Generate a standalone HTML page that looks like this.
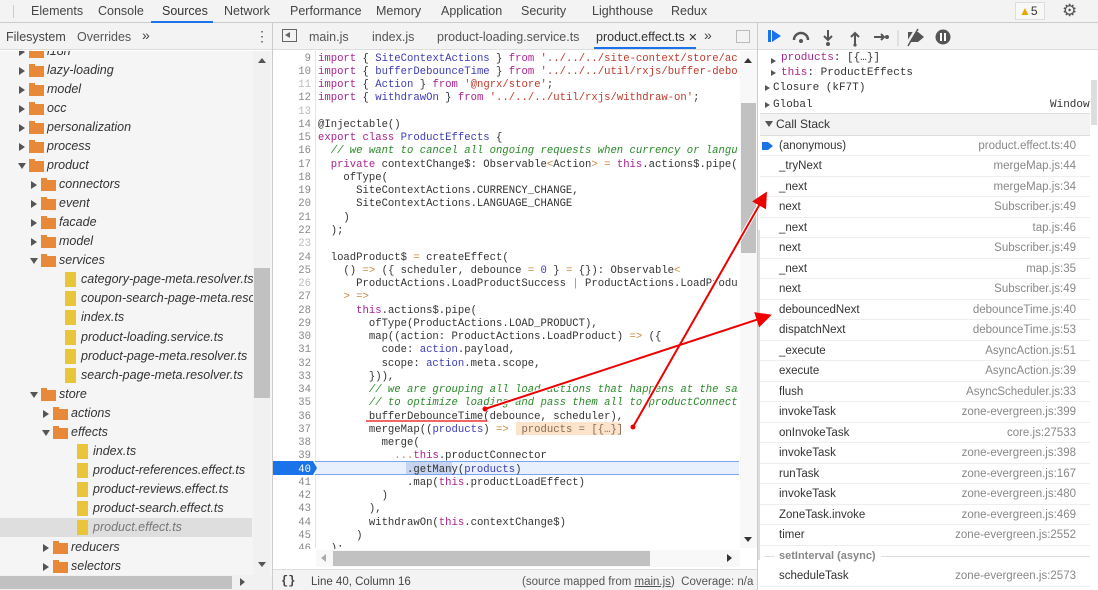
<!DOCTYPE html>
<html><head><meta charset="utf-8"><style>
*{margin:0;padding:0;box-sizing:border-box}
body{width:1098px;height:590px;overflow:hidden;background:#fff;font-family:"Liberation Sans",sans-serif;font-size:12px;color:#333;position:relative}
.a{position:absolute;white-space:nowrap}
.tab{position:absolute;top:4px;font-size:12.5px;color:#444}
.t{position:absolute;height:19px;line-height:19px;font-style:italic;font-size:12.5px;color:#333;white-space:nowrap}
.fo{position:absolute;width:15px;height:11px;background:#e8893a;top:5px}
.fo:before{content:"";position:absolute;left:0;top:-2px;width:6px;height:3px;background:#e8893a}
.fi{position:absolute;width:11px;height:15px;background:#e9c53c;top:2px}
.ar{position:absolute;top:6px;width:0;height:0;border-left:6px solid #555;border-top:4px solid transparent;border-bottom:4px solid transparent}
.ad{position:absolute;top:7px;width:0;height:0;border-top:6px solid #555;border-left:4px solid transparent;border-right:4px solid transparent}
.ln{position:absolute;left:275px;width:36px;text-align:right;font-family:"Liberation Mono",monospace;font-size:10.6px;color:#888;height:13.26px;line-height:13.26px}
.cd{position:absolute;left:318px;width:420px;overflow:hidden;font-family:"Liberation Mono",monospace;font-size:10.6px;white-space:pre;color:#333;height:13.26px;line-height:13.26px}
.k{color:#a8238f}.v{color:#3c3cb8}.s{color:#c0392b}.c{color:#2a8a2a;font-style:italic}.o{color:#c8873a}
.cs{position:absolute;left:760px;width:330px;height:20.5px;border-bottom:1px solid #eee;font-size:11.5px;line-height:20px}
.cs .n{position:absolute;left:19px;color:#333}
.cs .f{position:absolute;right:14px;color:#888}
.sc{position:absolute;font-family:"Liberation Mono",monospace;font-size:11px;color:#333}
</style></head><body>
<div class="a" style="left:0;top:0;width:1098px;height:23px;background:#f3f3f3;border-bottom:1px solid #ccc"></div>
<div class="a" style="left:13px;top:5px;width:1px;height:13px;background:#ccc"></div>
<div class="tab" style="left:31px">Elements</div>
<div class="tab" style="left:98px">Console</div>
<div class="tab" style="left:162px;color:#333">Sources</div>
<div class="a" style="left:151px;top:21px;width:62px;height:2px;background:#1a73e8"></div>
<div class="tab" style="left:224px">Network</div>
<div class="tab" style="left:290px">Performance</div>
<div class="tab" style="left:376px">Memory</div>
<div class="tab" style="left:441px">Application</div>
<div class="tab" style="left:521px">Security</div>
<div class="tab" style="left:592px">Lighthouse</div>
<div class="tab" style="left:671px">Redux</div>
<div class="a" style="left:1015px;top:2px;width:30px;height:18px;border:1px solid #ddd;background:#f8f8f8;font-size:12px;line-height:16px;padding-left:3px"><span style="color:#e8a700">▲</span>5</div>
<div class="a" style="left:1062px;top:1px;font-size:17px;color:#555">⚙</div>
<div class="a" style="left:1094px;top:3px;font-size:14px;color:#555">⋮</div>
<div class="a" style="left:0;top:23px;width:1098px;height:27px;background:#f3f3f3;border-bottom:1px solid #ddd"></div>
<div class="a" style="left:6px;top:30px;font-size:12.5px;color:#444">Filesystem</div>
<div class="a" style="left:77px;top:30px;font-size:12.5px;color:#555">Overrides</div>
<div class="a" style="left:142px;top:27px;font-size:14px;color:#444">»</div>
<div class="a" style="left:255px;top:28px;font-size:14px;color:#555">⋮</div>
<div class="a" style="left:272px;top:23px;width:1px;height:567px;background:#ccc"></div>
<div class="a" style="left:282px;top:29px;width:15px;height:13px;border:1px solid #666"></div>
<div class="a" style="left:285px;top:32px;border-right:5px solid #666;border-top:3.5px solid transparent;border-bottom:3.5px solid transparent;width:0;height:0"></div>
<div class="a" style="left:309px;top:30px;font-size:12.5px;color:#555">main.js</div>
<div class="a" style="left:372px;top:30px;font-size:12.5px;color:#555">index.js</div>
<div class="a" style="left:437px;top:30px;font-size:12.5px;color:#555">product-loading.service.ts</div>
<div class="a" style="left:596px;top:30px;font-size:12.5px;color:#333">product.effect.ts <span style="font-size:11px">✕</span></div>
<div class="a" style="left:594px;top:47px;width:102px;height:2px;background:#1a73e8"></div>
<div class="a" style="left:704px;top:27px;font-size:14px;color:#444">»</div>
<div class="a" style="left:736px;top:30px;width:14px;height:13px;border:1px solid #bbb"></div>
<div class="a" style="left:757px;top:23px;width:1px;height:567px;background:#ccc"></div>
<div class="a" style="left:768px;top:30px;width:3px;height:12px;background:#1a73e8"></div>
<div class="a" style="left:772px;top:30px;border-left:9px solid #1a73e8;border-top:6px solid transparent;border-bottom:6px solid transparent;width:0;height:0"></div>
<svg class="a" style="left:790px;top:26px" width="170" height="22" viewBox="0 0 170 22">
<path d="M4 14 A7 7 0 0 1 18 14" stroke="#555" stroke-width="2.5" fill="none"/><circle cx="11" cy="15" r="2" fill="#555"/>
<path d="M38 4 V13 M34 10 L38 14 L42 10" stroke="#555" stroke-width="2" fill="none"/><circle cx="38" cy="18" r="2" fill="#555"/>
<path d="M65 18 V8 M61 11 L65 7 L69 11" stroke="#555" stroke-width="2" fill="none"/><circle cx="65" cy="19" r="1.6" fill="#555"/>
<path d="M84 11 H94 M91 8 L94 11 L91 14" stroke="#555" stroke-width="2" fill="none"/><circle cx="97" cy="11" r="2" fill="#555"/>
<line x1="108" y1="4" x2="108" y2="20" stroke="#ccc"/>
<path d="M118 6 H128 L134 11 L128 16 H118 Z" fill="#555"/><line x1="116" y1="19" x2="126" y2="3" stroke="#f3f3f3" stroke-width="2.5"/><line x1="118" y1="20" x2="128" y2="3" stroke="#555" stroke-width="1.5"/>
<circle cx="153" cy="11" r="7.5" fill="#555"/><rect x="150" y="7" width="2" height="8" fill="#fff"/><rect x="154" y="7" width="2" height="8" fill="#fff"/>
</svg>
<div class="a" style="left:0;top:51px;width:272px;height:524px;background:#f5f5f5;overflow:hidden">
<div class="a" style="left:0;top:467px;width:252px;height:19px;background:#dedede"></div>
</div>
<div id="tree"></div>
<div class="a" style="left:253px;top:51px;width:17px;height:524px;background:#f1f1f1"></div>
<div class="a" style="left:254px;top:268px;width:16px;height:130px;background:#c1c1c1"></div>
<div class="a" style="left:258px;top:58px;border-bottom:5px solid #555;border-left:4px solid transparent;border-right:4px solid transparent;width:0;height:0"></div>
<div class="a" style="left:258px;top:562px;border-top:5px solid #555;border-left:4px solid transparent;border-right:4px solid transparent;width:0;height:0"></div>
<div class="a" style="left:0;top:575px;width:272px;height:15px;background:#f1f1f1"></div>
<div class="a" style="left:0;top:576px;width:232px;height:13px;background:#c1c1c1"></div>
<div class="a" style="left:240px;top:578px;border-left:5px solid #555;border-top:4px solid transparent;border-bottom:4px solid transparent;width:0;height:0"></div>
<div class="a" style="left:315px;top:51px;width:1px;height:497px;background:#e5e5e5"></div>
<div class="a" style="left:315px;top:461px;width:424px;height:14px;background:#e8f0fe;border-top:1px solid #7aa7f0;border-bottom:1px solid #7aa7f0"></div>
<svg class="a" style="left:273px;top:461px" width="45" height="14"><path d="M0 0 H40 L44 7 L40 14 H0 Z" fill="#1a73e8"/><text x="38" y="11" text-anchor="end" font-family="Liberation Mono" font-size="10.6" fill="#fff">40</text></svg>
<div class="a" style="left:406px;top:462px;width:46px;height:12px;background:#c7d4f0"></div>
<div class="a" style="left:516px;top:422px;width:104px;height:13px;background:#fbe3cc"></div>
<div id="code"></div>
<div class="a" style="left:740px;top:51px;width:17px;height:497px;background:#f8f8f8"></div>
<div class="a" style="left:741px;top:103px;width:15px;height:150px;background:#c1c1c1"></div>
<div class="a" style="left:744px;top:58px;border-bottom:5px solid #333;border-left:4px solid transparent;border-right:4px solid transparent;width:0;height:0"></div>
<div class="a" style="left:744px;top:537px;border-top:5px solid #333;border-left:4px solid transparent;border-right:4px solid transparent;width:0;height:0"></div>
<div class="a" style="left:316px;top:550px;width:424px;height:17px;background:#f8f8f8"></div>
<div class="a" style="left:333px;top:551px;width:317px;height:15px;background:#c1c1c1"></div>
<div class="a" style="left:321px;top:554px;border-right:5px solid #aaa;border-top:4px solid transparent;border-bottom:4px solid transparent;width:0;height:0"></div>
<div class="a" style="left:727px;top:554px;border-left:5px solid #333;border-top:4px solid transparent;border-bottom:4px solid transparent;width:0;height:0"></div>
<div class="a" style="left:273px;top:569px;width:484px;height:21px;background:#f3f3f3;border-top:1px solid #ddd"></div>
<div class="a" style="left:281px;top:574px;font-family:'Liberation Mono',monospace;font-size:12px;font-weight:bold;color:#444">{}</div>
<div class="a" style="left:311px;top:576px;font-size:11.5px;color:#444">Line 40, Column 16</div>
<div class="a" style="left:522px;top:576px;font-size:11.5px;color:#555">(source mapped from <u>main.js</u>)&nbsp; Coverage: n/a</div>
<div class="a" style="left:758px;top:51px;width:340px;height:539px;background:#fff"></div>
<div class="a" style="left:771px;top:58px;border-left:5px solid #555;border-top:3.5px solid transparent;border-bottom:3.5px solid transparent;width:0;height:0"></div>
<div class="sc" style="left:781px;top:52px"><span style="color:#a8238f">products</span>: [{…}]</div>
<div class="a" style="left:771px;top:70px;border-left:5px solid #555;border-top:3.5px solid transparent;border-bottom:3.5px solid transparent;width:0;height:0"></div>
<div class="sc" style="left:781px;top:67px"><span style="color:#a8238f">this</span>: ProductEffects</div>
<div class="a" style="left:765px;top:85px;border-left:5px solid #555;border-top:3.5px solid transparent;border-bottom:3.5px solid transparent;width:0;height:0"></div>
<div class="sc" style="left:773px;top:82px">Closure (kF7T)</div>
<div class="a" style="left:765px;top:102px;border-left:5px solid #555;border-top:3.5px solid transparent;border-bottom:3.5px solid transparent;width:0;height:0"></div>
<div class="sc" style="left:773px;top:99px">Global</div>
<div class="sc" style="left:1050px;top:99px">Window</div>
<div class="a" style="left:760px;top:113px;width:330px;height:23px;background:#f3f3f3;border-top:1px solid #ddd;border-bottom:1px solid #ddd"></div>
<div class="a" style="left:765px;top:121px;border-top:6px solid #555;border-left:4px solid transparent;border-right:4px solid transparent;width:0;height:0"></div>
<div class="a" style="left:776px;top:117px;font-size:12px;color:#333">Call Stack</div>
<div id="cs"></div>
<div class="a" style="left:1091px;top:80px;width:6px;height:45px;background:#ddd"></div>
<div class="a" style="left:758px;top:230px;width:2px;height:330px;background:#ddd"></div>
<svg class="a" style="left:762px;top:141px" width="12" height="10"><path d="M0 1 H6 L11 5 L6 9 H0 Z" fill="#1a73e8"/></svg>
<svg class="a" style="left:0;top:0" width="1098" height="590">
<defs><marker id="m" markerWidth="8" markerHeight="8" refX="6" refY="4" orient="auto"><path d="M0 0 L8 4 L0 8 Z" fill="#e00"/></marker></defs>
<line x1="485" y1="409" x2="768" y2="316" stroke="#fff" stroke-width="4"/>
<line x1="633" y1="427" x2="765" y2="195" stroke="#fff" stroke-width="4"/>
<line x1="485" y1="409" x2="768" y2="316" stroke="#e00" stroke-width="2" marker-end="url(#m)"/>
<line x1="633" y1="427" x2="765" y2="195" stroke="#e00" stroke-width="2" marker-end="url(#m)"/>
<circle cx="485" cy="409" r="2.5" fill="#e00"/><circle cx="633" cy="427" r="2.5" fill="#e00"/>
<line x1="366" y1="421" x2="487" y2="421" stroke="#e33" stroke-width="1.5"/>
</svg>
<script>
var T=[[1,'i18n',0,51,'c'],[1,'lazy-loading',0,70,'c'],[1,'model',0,89,'c'],[1,'occ',0,108,'c'],[1,'personalization',0,127,'c'],[1,'process',0,146,'c'],[1,'product',0,165,'o'],
[2,'connectors',0,184,'c'],[2,'event',0,203,'c'],[2,'facade',0,222,'c'],[2,'model',0,241,'c'],[2,'services',0,260,'o'],
[3,'category-page-meta.resolver.ts',1,279],[3,'coupon-search-page-meta.resolver.ts',1,298],[3,'index.ts',1,317],[3,'product-loading.service.ts',1,337],[3,'product-page-meta.resolver.ts',1,356],[3,'search-page-meta.resolver.ts',1,375],
[2,'store',0,394,'o'],[3,'actions',0,413,'c'],[3,'effects',0,432,'o'],[4,'index.ts',1,451],[4,'product-references.effect.ts',1,470],[4,'product-reviews.effect.ts',1,489],[4,'product-search.effect.ts',1,508],[4,'product.effect.ts',1,527],[3,'reducers',0,547,'c'],[3,'selectors',0,566,'c']];
var h='';T.forEach(function(r){var x=19+(r[0]-1)*12,y=r[3]-9;
if(r[2]){h+='<div class="fi" style="left:'+(x+34-12)+'px;top:'+(y+2)+'px"></div><div class="t" style="left:'+(x+50-12)+'px;top:'+y+'px'+(r[1]=='product.effect.ts'?';color:#777':'')+'">'+r[1]+'</div>';}
else{h+='<div class="'+(r[4]=='o'?'ad':'ar')+'" style="left:'+(r[4]=='o'?x-1:x)+'px;top:'+(y+(r[4]=='o'?7:6))+'px"></div><div class="fo" style="left:'+(x+10)+'px;top:'+(y+5)+'px"></div><div class="t" style="left:'+(x+28)+'px;top:'+y+'px">'+r[1]+'</div>';}});
document.getElementById('tree').innerHTML='<div style="position:absolute;left:0;top:51px;width:253px;height:524px;overflow:hidden"><div style="position:absolute;left:0;top:-51px">'+h+'</div></div>';
var C={9:'<span class="k">import</span> { <span class="v">SiteContextActions</span> } <span class="k">from</span> <span class="s">\'../../../site-context/store/actions\'</span>;',
10:'<span class="k">import</span> { <span class="v">bufferDebounceTime</span> } <span class="k">from</span> <span class="s">\'../../../util/rxjs/buffer-debounce\'</span>;',
11:'<span class="k">import</span> { <span class="v">Action</span> } <span class="k">from</span> <span class="s">\'@ngrx/store\'</span>;',
12:'<span class="k">import</span> { <span class="v">withdrawOn</span> } <span class="k">from</span> <span class="s">\'../../../util/rxjs/withdraw-on\'</span>;',13:'',
14:'@Injectable()',15:'<span class="k">export class</span> <span class="v">ProductEffects</span> {',
16:'  <span class="c">// we want to cancel all ongoing requests when currency or language changes</span>',
17:'  <span class="k">private</span> contextChange$: Observable<span class="o">&lt;</span>Action<span class="o">&gt;</span> <span class="o">=</span> <span class="k">this</span>.actions$.pipe(',
18:'    ofType(',19:'      SiteContextActions.CURRENCY_CHANGE,',20:'      SiteContextActions.LANGUAGE_CHANGE',21:'    )',22:'  );',23:'',
24:'  loadProduct$ <span class="o">=</span> createEffect(',
25:'    () <span class="o">=&gt;</span> ({ scheduler, debounce <span class="o">=</span> <span class="v">0</span> } <span class="o">=</span> {}): Observable<span class="o">&lt;</span>',
26:'      ProductActions.LoadProductSuccess <span class="o">|</span> ProductActions.LoadProductFail',
27:'    <span class="o">&gt; =&gt;</span>',28:'      <span class="k">this</span>.actions$.pipe(',29:'        ofType(ProductActions.LOAD_PRODUCT),',
30:'        map((action: ProductActions.LoadProduct) <span class="o">=&gt;</span> ({',31:'          code: <span class="v">action</span>.payload,',32:'          scope: <span class="v">action</span>.meta.scope,',33:'        })),',
34:'        <span class="c">// we are grouping all load actions that happens at the same time</span>',
35:'        <span class="c">// to optimize loading and pass them all to productConnector</span>',
36:'        bufferDebounceTime(debounce, scheduler),',
37:'        mergeMap((<span class="v">products</span>) <span class="o">=&gt;</span>  <span style="color:#8a6a50">products = [{…}]</span>',
38:'          merge(',39:'            <span class="o">...</span><span class="k">this</span>.productConnector',40:'              .getMany(<span class="v">products</span>)',
41:'              .map(<span class="k">this</span>.productLoadEffect)',42:'          )',43:'        ),',44:'        withdrawOn(<span class="k">this</span>.contextChange$)',45:'      )',46:'  );',47:''};
var c='';for(var n=9;n<=47;n++){var y=52.6+(n-9)*13.26;if(n!=40)c+='<div class="ln" style="top:'+y+'px'+((n==13||n==23||n==47||n==11||n==26)?';color:#bbb':'')+'">'+n+'</div>';c+='<div class="cd" style="top:'+y+'px">'+C[n]+'</div>';}
document.getElementById('code').innerHTML='<div style="position:absolute;left:0;top:51px;width:740px;height:498px;overflow:hidden"><div style="position:absolute;left:0;top:-51px">'+c+'</div></div>';
var S=[['(anonymous)','product.effect.ts:40'],['_tryNext','mergeMap.js:44'],['_next','mergeMap.js:34'],['next','Subscriber.js:49'],['_next','tap.js:46'],['next','Subscriber.js:49'],['_next','map.js:35'],['next','Subscriber.js:49'],['debouncedNext','debounceTime.js:40'],['dispatchNext','debounceTime.js:53'],['_execute','AsyncAction.js:51'],['execute','AsyncAction.js:39'],['flush','AsyncScheduler.js:33'],['invokeTask','zone-evergreen.js:399'],['onInvokeTask','core.js:27533'],['invokeTask','zone-evergreen.js:398'],['runTask','zone-evergreen.js:167'],['invokeTask','zone-evergreen.js:480'],['ZoneTask.invoke','zone-evergreen.js:469'],['timer','zone-evergreen.js:2552'],['ASYNC',''],['scheduleTask','zone-evergreen.js:2573']];
var s='';S.forEach(function(r,i){var y=135.5+i*20.5;if(r[0]=='ASYNC')s+='<div class="cs" style="top:'+y+'px;border:none"><div style="position:absolute;left:5px;right:0;top:10px;height:1px;background:#ddd"></div><span style="position:absolute;left:14px;padding:0 5px;background:#fff;color:#888;font-weight:bold;font-size:11px">setInterval (async)</span></div>';
else s+='<div class="cs" style="top:'+y+'px"><span class="n">'+r[0]+'</span><span class="f">'+r[1]+'</span></div>';});
document.getElementById('cs').innerHTML=s;
</script>
</body></html>
